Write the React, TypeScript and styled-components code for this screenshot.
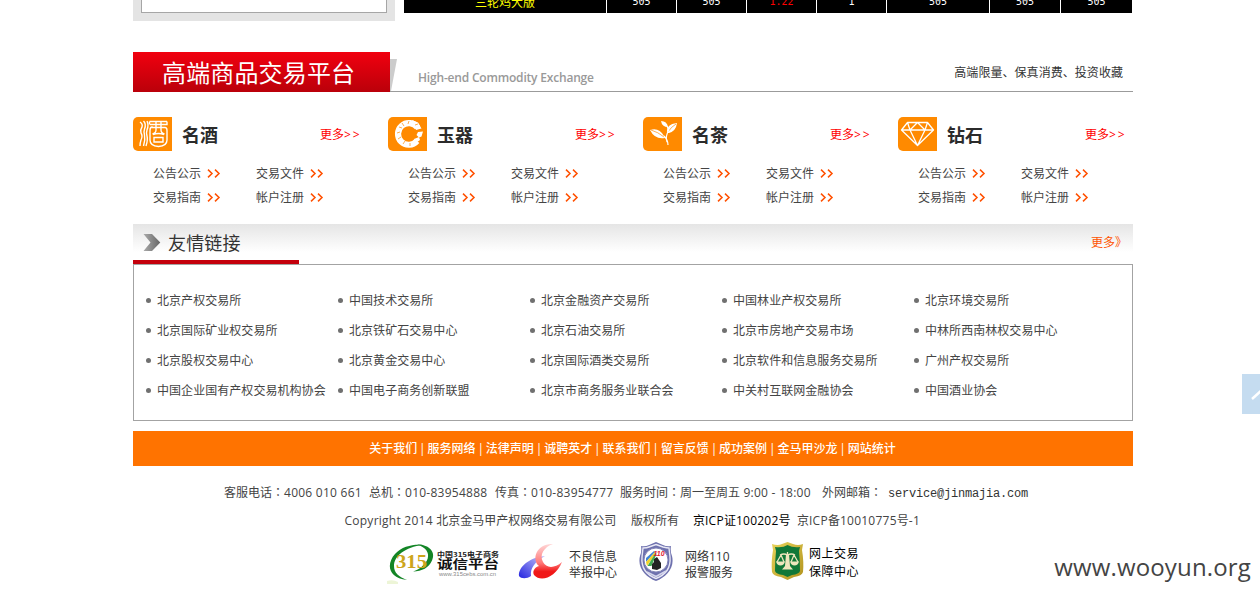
import React from 'react';
import styled, { createGlobalStyle } from 'styled-components';

const GlobalStyle = createGlobalStyle`
  * { box-sizing: border-box; }
  body {
    margin: 0;
    background: #fff;
    color: #444;
    font: 12px/24px 'Open Sans', 'Noto Sans CJK SC', sans-serif;
  }
  a { color: inherit; text-decoration: none; }
  svg { display: block; flex: none; }
`;

const Page = styled.div`
  position: relative;
  height: 597px;
  overflow: hidden;
  padding-left: 133px;
`;

const Column = styled.main`
  width: 1000px;
`;

const TopStrip = styled.div`
  display: flex;
  gap: 9px;
  height: 21px;
  margin-bottom: 31px;
`;

const LoginBox = styled.div`
  width: 262px;
  padding: 0 8px 8px;
  background: #e4e4e4;
`;

const LoginInner = styled.div`
  height: 13px;
  background: #fff;
  border: 1px solid #a6a6a6;
  border-top: 0;
`;

const QuoteRow = styled.div`
  display: grid;
  grid-template-columns: 202px repeat(4, 69px) 102px 70px 71px;
  gap: 1px;
  height: 13px;
`;

const QuoteCell = styled.div<{ $color?: string; $name?: boolean }>`
  display: flex;
  align-items: flex-end;
  justify-content: center;
  height: 13px;
  overflow: hidden;
  padding-bottom: ${(p) => (p.$name ? 1 : 3)}px;
  background: #000;
  color: ${(p) => p.$color ?? '#fff'};
  font: ${(p) => (p.$name ? "12px/20px 'Noto Sans CJK SC', sans-serif" : "10px/16px 'DejaVu Sans Mono', monospace")};
`;

const PlatformHead = styled.header`
  display: flex;
  height: 40px;
`;

const PlatformTitle = styled.h1`
  width: 257px;
  height: 40px;
  margin: 0;
  padding-left: 29px;
  background: linear-gradient(#f1000f, #ba000a);
  color: #fff;
  font: 400 24px/39px 'Noto Sans CJK SC', sans-serif;
  letter-spacing: 0.15px;
`;

const PlatformBar = styled.div`
  display: flex;
  flex: 1;
  justify-content: space-between;
  margin-left: 1px;
  padding: 0 10px 0 28px;
  border-bottom: 1px solid #9b9b9b;
`;

const Slant = styled.svg`
  margin: 7px -8px 0 0;
`;

const English = styled.span`
  color: #999;
  font: 600 12px/24px 'Open Sans', sans-serif;
  letter-spacing: -0.19px;
  padding-top: 14px;
`;

const Slogan = styled.span`
  padding-top: 9px;
  color: #333;
  letter-spacing: 0.05px;
`;

const Categories = styled.section`
  display: grid;
  grid-template-columns: repeat(4, 255px);
  margin-top: 25px;
  height: 107px;
`;

const CategoryHead = styled.div`
  display: flex;
  align-items: center;
  height: 34px;
`;

const CategoryIcon = styled.div`
  width: 39px;
  height: 34px;
  border-radius: 5px 0 0 5px;
  background: #ff8a00;
  overflow: hidden;
`;

const CategoryName = styled.h2`
  width: 138px;
  margin: 0 0 0 10px;
  color: #2b2b2b;
  font: 700 18px/34px 'Noto Sans CJK SC', sans-serif;
`;

const CategoryMore = styled.a`
  margin-top: 2px;
  color: #f00;

  span { letter-spacing: 1.8px; }
`;

const CategoryLinks = styled.div`
  display: grid;
  grid-template-columns: 103px 103px;
  padding: 11px 0 0 20px;
`;

const CategoryLink = styled.a`
  display: flex;
  align-items: center;
  gap: 6px;
  height: 24px;

  svg { margin-top: -2px; }
`;

const FriendHead = styled.header`
  display: flex;
  justify-content: space-between;
  height: 40px;
  background: linear-gradient(#e5e5e5, #fff 28px);
`;

const FriendTitle = styled.h2`
  display: flex;
  align-items: center;
  gap: 7px;
  width: 166px;
  margin: 0;
  padding-left: 10px;
  border-bottom: 4px solid #c4000c;
  color: #333;
  font: 400 18px/35px 'Noto Sans CJK SC', sans-serif;
  letter-spacing: 0.15px;
`;

const FriendMore = styled.a`
  width: 42px;
  padding-top: 7px;
  color: #ff5400;
  white-space: nowrap;
`;

const FriendBox = styled.ul`
  display: grid;
  grid-template-columns: repeat(5, 192px);
  grid-auto-rows: 30px;
  height: 157px;
  margin: 0;
  padding: 21px 0 0 12px;
  border: 1px solid #a3a3a3;
  list-style: none;
`;

const FriendItem = styled.li`
  display: flex;
  align-items: center;
  gap: 6px;
  white-space: nowrap;
  letter-spacing: 0.05px;

  &::before {
    content: '';
    width: 5px;
    height: 5px;
    margin-top: -2px;
    border-radius: 50%;
    background: #707070;
  }
`;

const FooterNav = styled.nav`
  display: flex;
  justify-content: center;
  height: 35px;
  margin-top: 10px;
  padding-right: 1px;
  background: #ff7300;
  color: #fff;
  font-weight: 500;
  line-height: 36px;

  a + a::before {
    content: '|';
    display: inline-block;
    width: 10.3px;
    text-align: center;
  }
`;

const FooterLine = styled.div<{ $left: number; $top: number }>`
  display: flex;
  height: 24px;
  margin-top: ${(p) => p.$top}px;
  padding-left: ${(p) => p.$left}px;
  white-space: nowrap;
`;

const Segment = styled.span<{ $width: number; $color?: string }>`
  width: ${(p) => p.$width}px;
  flex: none;
  color: ${(p) => p.$color ?? 'inherit'};

  b { font-weight: 400; letter-spacing: 0.25px; }
  i { font-style: normal; font-family: 'Noto Sans CJK TC', sans-serif; }
`;

const Email = styled.a`
  color: #333;
  font: 12px/28px 'Liberation Mono', monospace;
  letter-spacing: -0.2px;
`;

const Badges = styled.div`
  display: flex;
  height: 46px;
  margin-top: 6px;
  padding-left: 254px;
`;

const Badge = styled.a<{ $width: number; $gap: number }>`
  display: flex;
  gap: ${(p) => p.$gap}px;
  width: ${(p) => p.$width}px;

  svg { margin-top: 3px; }
`;

const BadgeText = styled.span<{ $top: number; $line: number; $color?: string; $spacing?: number }>`
  padding-top: ${(p) => p.$top}px;
  color: ${(p) => p.$color ?? '#333'};
  line-height: ${(p) => p.$line}px;
  letter-spacing: ${(p) => p.$spacing ?? 0}px;
  white-space: pre;
`;

const SideTab = styled.div`
  position: absolute;
  top: 374px;
  right: 0;
  width: 18px;
  height: 40px;
  background: #c5dcf0;
  overflow: hidden;
`;

const Watermark = styled.div`
  position: absolute;
  right: 9px;
  top: 551px;
  color: #444;
  font: 24px/32px 'Open Sans', sans-serif;
  letter-spacing: 0.16px;
`;

const Arrows = () => (
  <svg width="14" height="9" viewBox="0 0 14 9" fill="none" stroke="#ff5000" strokeWidth="1.5">
    <path d="M1 .6 5 4.500 1 8.400M8 .6l4 3.900-4 3.900" />
  </svg>
);

const WineIcon = () => (
  <svg width="39" height="34" viewBox="0 0 39 34" fill="none" stroke="#fff" strokeWidth="1.4">
    <path d="M7 5q3 2 2 5-2 3-1 6 2 3 0 7-1 3-1 6M10.500 4q3 3 1 8-1 3 0 6 1 5-1 11M14 4q2 4 0 9-1 3 0 6 1 4-1 10" />
    <path d="M16.500 4.500H34M16.500 4.500v3M34 4.500v3H17M19 10.500h13q2 0 2 3V23q0 6-8.500 6.500Q17 29 17 23v-9.500q0-3.500 2-3.500zM23 5v8q0 3-3.500 4M28 5v8q0 3 3.500 4M21 20.500h9v4.500h-9zM20 17.500q5.500-2 11 0" />
  </svg>
);

const JadeIcon = () => (
  <svg width="39" height="34" viewBox="0 0 39 34" fill="none">
    <path d="M29.500 10.500A10.800 10.800 0 1 0 29 24" stroke="#fff" strokeWidth="6.200" />
    <path d="m24 3 6 2.500 3.500 6-5.500 1.500zM30 15l5-.5-1.500 5-2.500 1-2.500-2.500zM26 22l5-2 1 3-4 3z" fill="#fff" />
    <path d="m14 6 2 3m-5 1 3 1m-5 5 3-1m-2 7 3-2m2 7 2-3m5 5v-3M21 4l-1 3M27 8l3-1" stroke="#ffae4d" strokeWidth="1" />
  </svg>
);

const TeaIcon = () => (
  <svg width="39" height="34" viewBox="0 0 39 34" fill="#fff">
    <path d="M7 13q9-3 14 6l1 2q-10 2-15-8zM24 16q-1-9 10-10-1 8-8 10zM18 4q6 0 7 6-6 0-7-6z" />
    <path d="M8 13q7 2 13 7M25 15q3-5 8-8" stroke="#ff8a00" strokeWidth=".7" fill="none" />
    <path d="M21 19q4 4 4 9M26 13q-4 6-2 12M24 9l2 5" stroke="#fff" strokeWidth="1.2" fill="none" />
  </svg>
);

const DiamondIcon = () => (
  <svg width="39" height="34" viewBox="0 0 39 34" fill="none" stroke="#fff" strokeWidth="1.3" strokeLinejoin="round">
    <path d="M9.500 5.500h20l6 7.500-16 15.500L3.500 13zM3.500 13h32M9.500 5.500 12 13l7.500-7.500L27 13l2.500-7.500M12 13l7.500 15.500L27 13" />
  </svg>
);

const Chevron = () => (
  <svg width="18" height="17" viewBox="0 0 18 17">
    <defs>
      <linearGradient id="chevron">
        <stop offset="0" stopColor="#aaa" />
        <stop offset="1" stopColor="#666" />
      </linearGradient>
    </defs>
    <path d="M.5 0H9l8.300 8.500L9 17H.500l7-8.500z" fill="url(#chevron)" />
  </svg>
);

const TrustLogo = () => (
  <svg width="113" height="44" viewBox="0 0 113 44">
    <path d="M0 39q6-2 11 1v2H0z" fill="#edf5d7" />
    <path d="M20 38C1 36-1 22 8 12 15 4 27 2 36 3 18 5 7 14 7 24c0 7 5 11 13 14z" fill="#138526" />
    <path d="M30 2.500c13 0 19 8 15 16-3 7-10 11-19 11 15-5 23-21 4-27z" fill="#138526" />
    <text x="9" y="25.500" fontFamily="Liberation Serif, serif" fontWeight="700" fontSize="19" textLength="31" lengthAdjust="spacingAndGlyphs" fill="#cda51b">315</text>
    <text x="50" y="15" fontFamily="Noto Sans CJK SC, sans-serif" fontWeight="700" fontSize="6.500" textLength="62" lengthAdjust="spacingAndGlyphs" fill="#222">中国315电子商务</text>
    <text x="50" y="26.500" fontFamily="Noto Sans CJK SC, sans-serif" fontWeight="700" fontSize="12" textLength="62" lengthAdjust="spacingAndGlyphs" fill="#111">诚信平台</text>
    <text x="52" y="33.500" fontFamily="Liberation Sans, sans-serif" fontSize="6" textLength="57" lengthAdjust="spacingAndGlyphs" fill="#888">www.315cebs.com.cn</text>
  </svg>
);

const ReportLogo = () => (
  <svg width="44" height="44" viewBox="0 0 44 44">
    <defs>
      <linearGradient id="reportRed" x1="0" y1="0" x2="0" y2="1">
        <stop offset="0" stopColor="#ffd7d7" />
        <stop offset=".55" stopColor="#f77" />
        <stop offset=".8" stopColor="#f01818" />
      </linearGradient>
      <linearGradient id="reportBlue" x1="0" y1="1" x2="1" y2="0">
        <stop offset="0" stopColor="#2424e0" />
        <stop offset="1" stopColor="#c8c8fa" />
      </linearGradient>
    </defs>
    <path d="M1 34C0 25 12 15 27 14 17 20 12 26 13 34c-4 3-10 3-12 0z" fill="url(#reportBlue)" />
    <path d="M35 2C19 1 13 17 21 24c-4 1-7 5-5 9 7 8 22 2 28-13-8 7-16 6-19 0C21 13 26 5 35 2z" fill="url(#reportRed)" />
  </svg>
);

const PoliceLogo = () => (
  <svg width="34" height="42" viewBox="0 0 34 42">
    <path d="M17 0 24 3q4 2 8 1-1 5 1 10c3 12-6 21-16 25C7 35-2 26 1 14q2-5 1-10 4 1 8-1z" fill="#6e71ae" />
    <path d="M17 2.500 24 5q4 1 6 1l1 9C32 26 26 33 17 36.500 8 33 2 26 3 15l1-9q4 0 6-1z" fill="none" stroke="#e8e8f5" strokeWidth="1.400" />
    <path d="M8 30 17 34.500 27 29" stroke="#d5d6ec" strokeWidth="1.600" fill="none" />
    <circle cx="17" cy="18" r="12" fill="#fff" stroke="#8486b8" />
    <path d="m7 16 8-7 1 1-9 10z" fill="#3f83d7" />
    <path d="m7 20 9-10 1 1-9 13z" fill="#f3d22a" />
    <path d="m8.500 24 8-13 1 1-5 12z" fill="#42a851" />
    <text x="14.500" y="14" fontFamily="Liberation Sans, sans-serif" fontWeight="700" fontStyle="italic" fontSize="7" fill="#e02030">110</text>
    <path d="M13 27v-5l2-2v-3l3-2 2 3 2 3v5l-4 2z" fill="#222" />
  </svg>
);

const ShieldLogo = () => (
  <svg width="33" height="40" viewBox="0 0 33 40">
    <defs>
      <linearGradient id="gold" x1="0" y1="0" x2="1" y2="1">
        <stop offset="0" stopColor="#e9d45a" />
        <stop offset="1" stopColor="#b1921d" />
      </linearGradient>
    </defs>
    <path d="M1 2q6 2 10 0l5.500-2L22 2q5 2 10 0l-1 6q2 12 1 22-1 4-9 5l-6.500 3L10 35q-8-1-9-5-1-10 1-22z" fill="url(#gold)" />
    <path d="M4 5q8 1 12.500-2Q22 6 29 5l-1 4q1 10 1 20-1 3-8 4l-4.500 2L12 33q-7-1-8-4 0-10 1-20z" fill="#117838" />
    <g fill="none" stroke="#eee6bd" strokeWidth="1.300">
      <path d="M16.500 10v16M9 13q4-2 7.500 0 4-2 7.500 0M10 13l-4 7M10 13l3 7M23 13l-3 7M23 13l4 7" />
    </g>
    <path d="M5 19.500h9q-1 4-4.500 4T5 19.500zM19 19.500h9q-1 4-4.500 4t-4.500-4zM15 12h3l1 12 3 3.500H11l3-3.500z" fill="#eee6bd" />
  </svg>
);

const categories = [
  { name: '名酒', Icon: WineIcon },
  { name: '玉器', Icon: JadeIcon },
  { name: '名茶', Icon: TeaIcon },
  { name: '钻石', Icon: DiamondIcon },
];
const categoryLinks = ['公告公示', '交易文件', '交易指南', '帐户注册'];

const friends = [
  '北京产权交易所', '中国技术交易所', '北京金融资产交易所', '中国林业产权交易所', '北京环境交易所',
  '北京国际矿业权交易所', '北京铁矿石交易中心', '北京石油交易所', '北京市房地产交易市场', '中林所西南林权交易中心',
  '北京股权交易中心', '北京黄金交易中心', '北京国际酒类交易所', '北京软件和信息服务交易所', '广州产权交易所',
  '中国企业国有产权交易机构协会', '中国电子商务创新联盟', '北京市商务服务业联合会', '中关村互联网金融协会', '中国酒业协会',
];

const footerLinks = ['关于我们', '服务网络', '法律声明', '诚聘英才', '联系我们', '留言反馈', '成功案例', '金马甲沙龙', '网站统计'];

export default function App() {
  return (
    <Page>
      <GlobalStyle />
      <Column>
        <TopStrip>
          <LoginBox><LoginInner /></LoginBox>
          <QuoteRow>
            <QuoteCell $name $color="#ff0">三轮鸡大版</QuoteCell>
            <QuoteCell>505</QuoteCell>
            <QuoteCell>505</QuoteCell>
            <QuoteCell $color="#f00">1.22</QuoteCell>
            <QuoteCell>1</QuoteCell>
            <QuoteCell>505</QuoteCell>
            <QuoteCell>505</QuoteCell>
            <QuoteCell>505</QuoteCell>
          </QuoteRow>
        </TopStrip>

        <PlatformHead>
          <PlatformTitle>高端商品交易平台</PlatformTitle>
          <Slant width="7" height="32" viewBox="0 0 7 32"><path d="M0 0h7L1 32H0z" fill="#ccc" /></Slant>
          <PlatformBar>
            <English>High-end Commodity Exchange</English>
            <Slogan>高端限量、保真消费、投资收藏</Slogan>
          </PlatformBar>
        </PlatformHead>

        <Categories>
          {categories.map(({ name, Icon }) => (
            <article key={name}>
              <CategoryHead>
                <CategoryIcon><Icon /></CategoryIcon>
                <CategoryName>{name}</CategoryName>
                <CategoryMore>更多<span>&gt;&gt;</span></CategoryMore>
              </CategoryHead>
              <CategoryLinks>
                {categoryLinks.map((link) => (
                  <CategoryLink key={link}>{link}<Arrows /></CategoryLink>
                ))}
              </CategoryLinks>
            </article>
          ))}
        </Categories>

        <FriendHead>
          <FriendTitle><Chevron />友情链接</FriendTitle>
          <FriendMore>更多》</FriendMore>
        </FriendHead>
        <FriendBox>
          {friends.map((f) => <FriendItem key={f}>{f}</FriendItem>)}
        </FriendBox>

        <FooterNav>
          {footerLinks.map((l) => <a key={l}>{l}</a>)}
        </FooterNav>

        <FooterLine $left={91} $top={14}>
          <Segment $width={145}>客服电话<i>：</i><b>4006 010 661</b></Segment>
          <Segment $width={126}>总机<i>：</i><b>010-83954888</b></Segment>
          <Segment $width={125}>传真<i>：</i><b>010-83954777</b></Segment>
          <Segment $width={202}>服务时间<i>：</i>周一至周五<b> 9:00 - 18:00</b></Segment>
          <Segment $width={66}>外网邮箱<i>：</i></Segment>
          <Email>service@jinmajia.com</Email>
        </FooterLine>
        <FooterLine $left={211.500} $top={5}>
          <Segment $width={286.500}><b>Copyright 2014 </b>北京金马甲产权网络交易有限公司</Segment>
          <Segment $width={62}>版权所有</Segment>
          <Segment $width={104} $color="#000">京<b>ICP</b>证<b>100202</b>号</Segment>
          <Segment $width={130}>京<b>ICP</b>备<b>10010775</b>号<b>-1</b></Segment>
        </FooterLine>

        <Badges>
          <Badge $width={131} $gap={0}><TrustLogo /></Badge>
          <Badge $width={121} $gap={7}>
            <ReportLogo />
            <BadgeText $top={10} $line={16}>{'不良信息\n举报中心'}</BadgeText>
          </Badge>
          <Badge $width={132} $gap={12}>
            <PoliceLogo />
            <BadgeText $top={10} $line={16}>{'网络110\n报警服务'}</BadgeText>
          </Badge>
          <Badge $width={95} $gap={5}>
            <ShieldLogo />
            <BadgeText $top={6} $line={18} $color="#000" $spacing={0.5}>{'网上交易\n保障中心'}</BadgeText>
          </Badge>
        </Badges>
      </Column>

      <SideTab>
        <svg width="18" height="40" viewBox="0 0 18 40" fill="none" stroke="#fff" strokeWidth="2.500">
          <path d="m10 25 10-9" />
        </svg>
      </SideTab>
      <Watermark>www.wooyun.org</Watermark>
    </Page>
  );
}
